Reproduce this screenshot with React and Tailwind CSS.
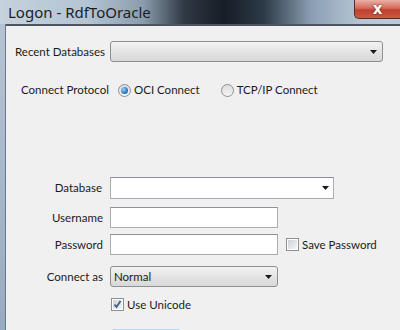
import React from 'react';

function ComboArrow() {
  return (
    <svg width="7" height="4" viewBox="0 0 7 4" className="shrink-0">
      <path d="M0 0H7L3.5 4Z" fill="#1a1a1a" />
    </svg>
  );
}

function Radio({ checked }) {
  return (
    <span className="w-[13px] h-[13px] rounded-full border border-[#8a8f96] bg-[linear-gradient(180deg,#dcdcdc,#f6f6f6)] flex items-center justify-center shrink-0">
      {checked && (
        <span className="w-[7px] h-[7px] rounded-full bg-[radial-gradient(circle_at_35%_35%,#8fd0ff,#1f6fb8_70%,#164f86)]" />
      )}
    </span>
  );
}

function Checkbox({ checked }) {
  return (
    <span className="w-[13px] h-[13px] border border-[#8e8f8f] bg-white flex items-center justify-center shrink-0">
      <span className="w-[9px] h-[9px] bg-[linear-gradient(135deg,#cfd3d8,#f4f4f4)] flex items-center justify-center">
        {checked && (
          <svg width="9" height="9" viewBox="0 0 9 9">
            <path d="M1.5 4.5L3.5 7L7.5 1" stroke="#3f5f8f" strokeWidth="1.8" fill="none" />
          </svg>
        )}
      </span>
    </span>
  );
}

export default function App() {
  return (
    <div className="w-[400px] h-[330px] overflow-hidden flex flex-col font-['Lato'] text-[11.5px] whitespace-nowrap text-[#1b1b1b] bg-[#f0f0f0]">
      {/* title bar */}
      <div className="h-[24px] shrink-0 flex items-start justify-between bg-[linear-gradient(90deg,#c6d2dd_0%,#b3c4d4_22%,#8a9bac_36%,#2f3944_46%,#171d25_56%,#2d3a48_66%,#8ca0b4_78%,#b5c5d5_90%,#bccbd9_100%)]">
        <span className="pl-[8px] pt-[2px] text-[15px] leading-[20px] text-[#1a1f25] font-['Noto_Sans']">Logon - RdfToOracle</span>
        <div className="w-[46px] h-[19px] rounded-bl-[5px] border border-t-0 border-r-0 border-[#5c2a24] bg-[linear-gradient(180deg,#eab1a6_0%,#d36c5c_45%,#c2402f_55%,#c95a45_100%)] flex items-center justify-center">
          <span className="text-white font-bold text-[15px] leading-none font-['DejaVu_Sans'] [text-shadow:0_0_2px_#3a1410]">x</span>
        </div>
      </div>

      <div className="flex flex-1 min-h-0">
        <div className="w-[6px] bg-[linear-gradient(180deg,#b4c4d4,#97abc2)] border-r border-[#6b7886]" />
        <div className="flex-1 border-t-2 border-[#4c5560] flex flex-col pl-[9px] pt-[15px] overflow-hidden">
          {/* Recent Databases */}
          <div className="flex items-center h-[21px] shrink-0">
            <span className="w-[95px] shrink-0">Recent Databases</span>
            <div className="w-[273px] h-[21px] rounded-[3px] border border-[#8e8f8f] bg-[linear-gradient(180deg,#f3f3f3,#e4e4e4_50%,#d8d8d8)] flex items-center justify-end pr-[5px]">
              <ComboArrow />
            </div>
          </div>

          {/* Connect Protocol */}
          <div className="flex items-center h-[16px] mt-[20px] shrink-0">
            <span className="w-[103px] pl-[6px] shrink-0">Connect Protocol</span>
            <div className="flex items-center gap-[3px]">
              <Radio checked />
              <span>OCI Connect</span>
            </div>
            <div className="flex items-center gap-[3px] ml-[21px]">
              <Radio />
              <span>TCP/IP Connect</span>
            </div>
          </div>

          {/* lower form */}
          <div className="flex flex-col mt-[79px] shrink-0">
            <div className="flex items-center h-[22px]">
              <span className="w-[88px] text-right pr-[1px] shrink-0">Database</span>
              <div className="ml-[7px] w-[224px] h-[22px] border border-[#abadb3] border-t-[#8d9199] bg-white flex items-center justify-end pr-[4px]">
                <ComboArrow />
              </div>
            </div>
            <div className="flex items-center h-[21px] mt-[8px]">
              <span className="w-[88px] text-right shrink-0">Username</span>
              <div className="ml-[7px] w-[168px] h-[21px] border border-[#abadb3] border-t-[#8d9199] bg-white" />
            </div>
            <div className="flex items-center h-[21px] mt-[6px]">
              <span className="w-[88px] text-right shrink-0">Password</span>
              <div className="ml-[7px] w-[168px] h-[21px] border border-[#abadb3] border-t-[#8d9199] bg-white" />
              <div className="flex items-center gap-[3px] ml-[8px]">
                <Checkbox />
                <span>Save Password</span>
              </div>
            </div>
            <div className="flex items-center h-[21px] mt-[11px]">
              <span className="w-[88px] text-right shrink-0">Connect as</span>
              <div className="ml-[7px] w-[168px] h-[21px] rounded-[3px] border border-[#8e8f8f] bg-[linear-gradient(180deg,#f3f3f3,#e4e4e4_50%,#d8d8d8)] flex items-center justify-between pl-[3px] pr-[5px]">
                <span>Normal</span>
                <ComboArrow />
              </div>
            </div>
            <div className="flex items-center gap-[3px] mt-[11px] ml-[96px] h-[13px]">
              <Checkbox checked />
              <span>Use Unicode</span>
            </div>
            {/* top edge of the button below, cut off */}
            <div className="mt-[18px] ml-[96px] w-[70px] h-[20px] rounded-[3px] border border-[#a8dff5] bg-[#eaf6fc]" />
          </div>
        </div>
      </div>
    </div>
  );
}
